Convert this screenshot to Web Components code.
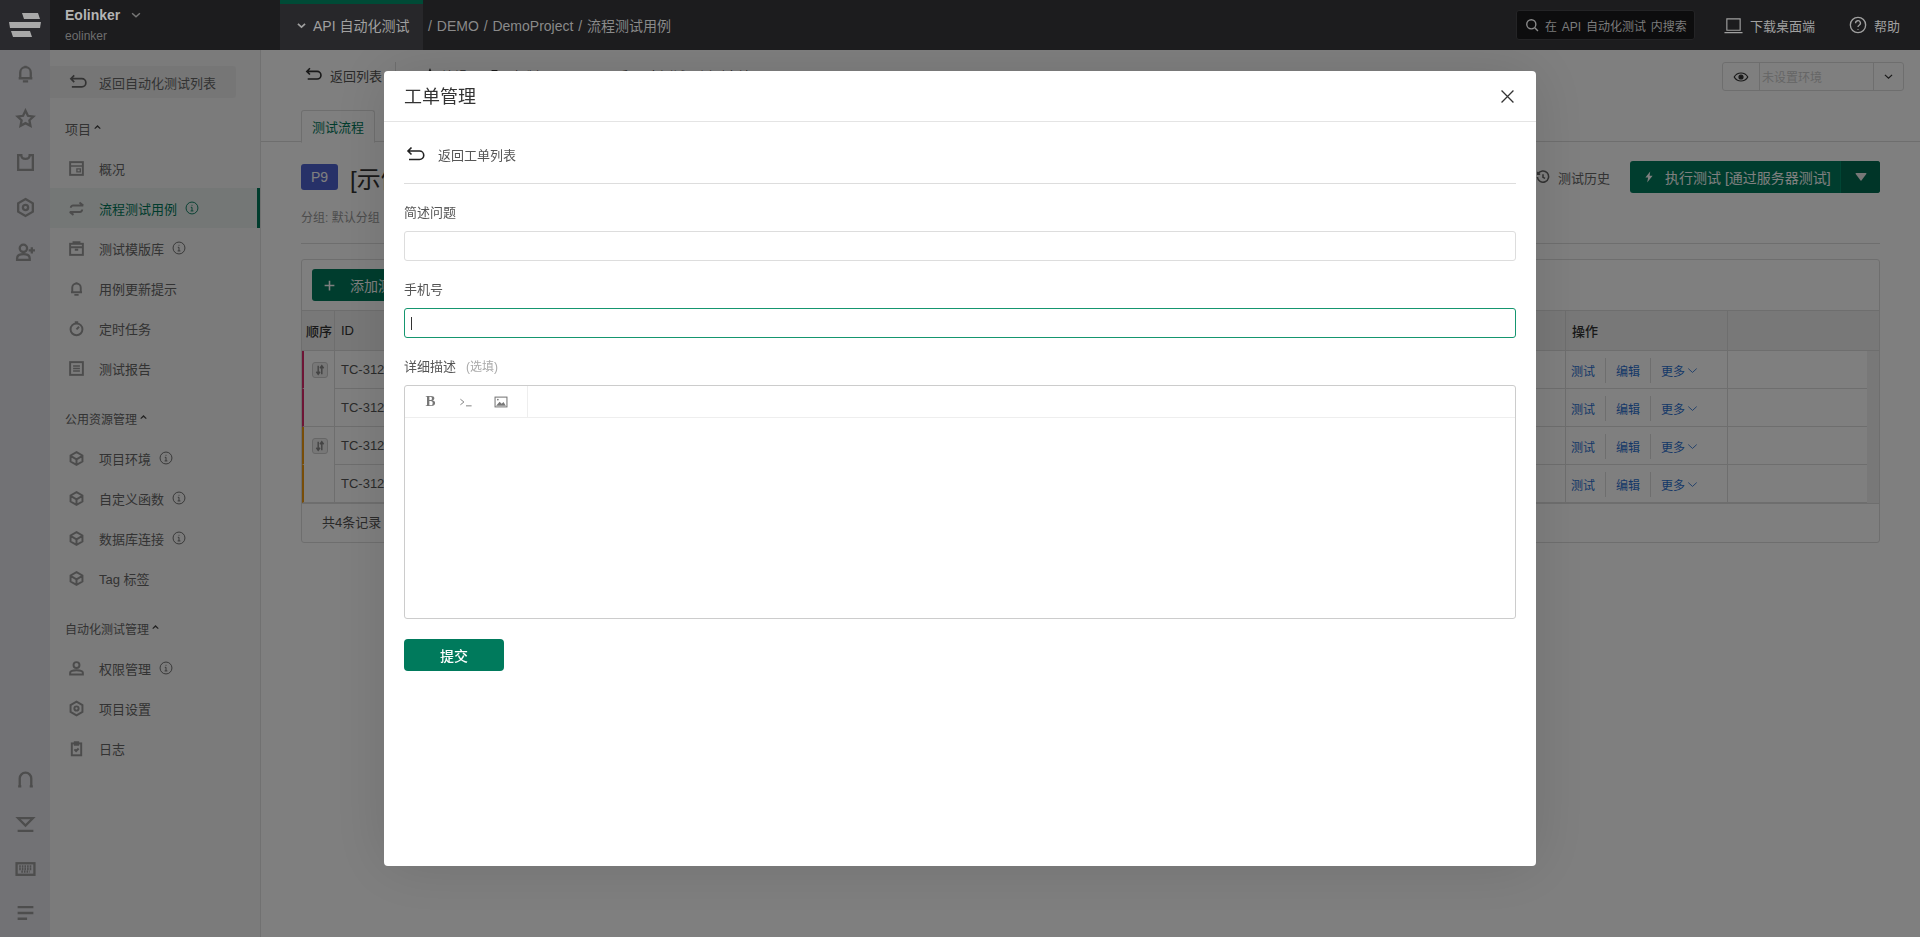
<!DOCTYPE html>
<html lang="zh">
<head>
<meta charset="utf-8">
<title>工单管理</title>
<style>
  html, body { margin: 0; height: 100%; overflow: hidden; }
  body { font: 13px "Liberation Sans", "Noto Sans CJK SC", sans-serif; color: #333; background: #fff; }
</style>
</head>
<body>
<eo-app>
  <eo-topbar slot="top"></eo-topbar>
  <eo-rail slot="rail"></eo-rail>
  <eo-sidebar slot="side">
    <nav-section label="项目">
      <nav-item icon="overview">概况</nav-item>
      <nav-item icon="exchange" info active>流程测试用例</nav-item>
      <nav-item icon="window" info>测试模版库</nav-item>
      <nav-item icon="bell">用例更新提示</nav-item>
      <nav-item icon="stopwatch">定时任务</nav-item>
      <nav-item icon="report">测试报告</nav-item>
    </nav-section>
    <nav-section label="公用资源管理" small>
      <nav-item icon="cube" info>项目环境</nav-item>
      <nav-item icon="cube" info>自定义函数</nav-item>
      <nav-item icon="cube" info>数据库连接</nav-item>
      <nav-item icon="cube">Tag 标签</nav-item>
    </nav-section>
    <nav-section label="自动化测试管理" small>
      <nav-item icon="person" info>权限管理</nav-item>
      <nav-item icon="gear">项目设置</nav-item>
      <nav-item icon="clipboard">日志</nav-item>
    </nav-section>
  </eo-sidebar>
  <eo-main slot="main"></eo-main>
</eo-app>

<ticket-modal heading="工单管理">
  <form-field label="简述问题"><text-box></text-box></form-field>
  <form-field label="手机号"><text-box focused></text-box></form-field>
  <form-field label="详细描述" hint="(选填)"><rich-editor></rich-editor></form-field>
</ticket-modal>

<script>
// all icons share one 20x20 box
const ICONS = {
  bell: '<path d="M5 14.5V9a5 5 0 0 1 10 0v5.500M3.500 14.500h13M7.500 17.500h5M10 2.500V4"/>',
  star: '<path d="M10 2.500l2.300 4.900 5.200.7-3.800 3.600 1 5.300L10 14.400 5.300 17l1-5.300L2.500 8.100l5.200-.7z"/>',
  shirt: '<path d="M6 3H3v14h14V3h-3c0 2-1.500 3.500-4 3.500S6 5 6 3z"/>',
  gear: '<path d="M10 2l7 4v8l-7 4-7-4V6z"/><circle cx="10" cy="10" r="2.500"/>',
  userplus: '<circle cx="8" cy="6" r="3.500"/><path d="M2 17v-1.500c0-2.500 2.500-4 6-4s6 1.500 6 4V17zM16 5v6M13 8h6"/>',
  headset: '<path d="M4.500 16V9a5.500 5.500 0 0 1 11 0v7M3 16.500h3M14 16.500h3"/>',
  download: '<path d="M3 4h14l-7 7zM2.500 16h15"/>',
  keyboard: '<rect x="1.500" y="5" width="17" height="11"/><path d="M4 8h12M4 10.500h12M6 13h8" stroke-dasharray="1.500 1"/>',
  list: '<path d="M2.500 4h15M2.500 9.500h15M2.500 15h9"/>',
  overview: '<rect x="2.500" y="2.500" width="15" height="15"/><path d="M2.500 7h15M10.500 10.500h4V14h-4z" stroke-width="1.600"/>',
  exchange: '<path d="M18 6.500H6a2.700 2.700 0 0 0-2.700 2.700M2 14h12a2.700 2.700 0 0 0 2.700-2.700M13.500 3l4.500 3.500M6.500 17.500L2 14"/>',
  window: '<rect x="2.500" y="4.500" width="15" height="13"/><path d="M2.500 8.500h15M8 11.500h4M6.500 4.500V2.500h7v2"/>',
  stopwatch: '<circle cx="10" cy="11" r="7"/><path d="M10 11l3-3M8 2.500h4"/>',
  report: '<rect x="2.500" y="2.500" width="15" height="15"/><path d="M6 7h8M6 10h8M6 13h8" stroke-width="1.600"/>',
  cube: '<path d="M10 2.500l7 4v7l-7 4-7-4v-7zM3 7l7 4 7-4M10 11v6.500"/>',
  person: '<circle cx="10" cy="6" r="3.500"/><path d="M2.500 17v-2c0-1.800 3-3 7.500-3s7.500 1.200 7.500 3v2z"/>',
  clipboard: '<rect x="4.500" y="4" width="11" height="14"/><path d="M8 2.500h4v3H8zM7.500 11l2 2 3-3"/>',
  back: '<path d="M5.500 2.500L2 6l3.500 3.500M2 6h11.500a4.200 4.200 0 0 1 0 8.500H3"/>',
  info: '<circle cx="10" cy="10" r="8.500"/><path d="M10 5.500v1.200M8.300 9H10v5.200M8 14.200h4"/>',
  search: '<circle cx="9" cy="9" r="6.500"/><path d="M14 14l4.500 4.500"/>',
  monitor: '<path d="M3 3h14v12H3zM.5 17.500h19"/>',
  help: '<circle cx="10" cy="10" r="8.500"/><path d="M7.300 8a2.700 2.700 0 1 1 4 2.300c-.9.5-1.300 1-1.300 2M10 14.500v.8"/>',
  chevron: '<path d="M3.500 7l6.500 6 6.500-6"/>',
  eye: '<path d="M1.500 10c2-3.500 5-5 8.500-5s6.500 1.500 8.500 5c-2 3.500-5 5-8.500 5s-6.500-1.500-8.500-5z"/><circle cx="10" cy="10" r="2.500" fill="currentColor"/>',
  clock: '<path d="M3 5.500A8 8 0 1 1 2 10M2.500 2.500v3.500H6M10 6v4.500l3 1.500"/>',
  bolt: '<path d="M12 1L4 11h4.500L7 19l9-11h-5z" fill="currentColor" stroke="none"/>',
  plus: '<path d="M10 2.500v15M2.500 10h15"/>',
  close: '<path d="M3 3l14 14M17 3L3 17"/>',
  picture: '<rect x="1.500" y="3" width="17" height="14"/><path d="M3 15.500l5-6 3 3 2.500-2.500 3.500 5.500z" fill="currentColor" stroke="none"/><circle cx="5.500" cy="6.500" r="1.200" fill="currentColor" stroke="none"/>',
  terminal: '<path d="M2 6l5 4-5 4M10 15.500h8" stroke-width="1.300"/>',
  drag: '<path d="M7 3v13M4 13l3 4 3-4M13 17V4M10 7l3-4 3 4" stroke-width="2.400"/>'
};

// base class, every element puts css() + html() in an open shadow root
class EoElement extends HTMLElement {
  connectedCallback() {
    if (this.shadowRoot) return;
    this.attachShadow({ mode: "open" }).innerHTML = `<style>${this.css()}</style>${this.html()}`;
  }
  css() { return ""; }
  html() { return "<slot></slot>"; }
}

class EoIcon extends EoElement {
  css() {
    const size = this.getAttribute("size") || 20;
    const weight = this.getAttribute("weight") || 2;
    return `
      :host { display: inline-flex; flex: none; width: ${size}px; height: ${size}px; }
      svg { width: 100%; height: 100%; fill: none; stroke: currentColor; stroke-width: ${weight}; display: block; }`;
  }
  html() {
    return `<svg viewBox="0 0 20 20">${ICONS[this.getAttribute("name")] || ""}</svg>`;
  }
}

class EoApp extends EoElement {
  css() {
    return `
      :host { display: grid; height: 100vh; grid-template: 50px 1fr / 50px 211px 1fr; overflow: hidden; }
      ::slotted([slot=top]) { grid-column: 1 / -1; }`;
  }
  html() {
    return `<slot name="top"></slot><slot name="rail"></slot><slot name="side"></slot><slot name="main"></slot>`;
  }
}

class EoTopbar extends EoElement {
  css() {
    return `
      :host { display: flex; align-items: stretch; height: 50px; background: #1c1c1e; color: #9a9a9a; position: relative; z-index: 20; }
      .logo { width: 50px; background: #29292d; display: flex; align-items: center; justify-content: center; }
      .org { width: 215px; padding-left: 15px; display: flex; flex-direction: column; justify-content: center; }
      .org b { font-size: 14px; color: #b4b4b4; line-height: 16px; display: flex; align-items: center; gap: 10px; margin-top: -1px; }
      .org b eo-icon { color: #777; }
      .org span { font-size: 12px; color: #6e6e6e; line-height: 14px; margin-top: 6px; }
      .module { width: 127px; padding-left: 16px; background: #27272a; border-top: 4px solid #004a36; display: flex; align-items: center; gap: 6px; font-size: 14px; white-space: nowrap; color: #a0a0a0; padding-bottom: 4px; }
      .crumb { margin-left: 5px; display: flex; align-items: center; font-size: 14px; word-spacing: 1px; color: #8a8a8a; white-space: pre; }
      .grow { flex: 1; }
      .search { align-self: center; width: 177px; height: 28px; border: 1px solid #242426; border-radius: 3px; background: #0d0d0e; display: flex; align-items: center; font-size: 12px; word-spacing: 1.500px; color: #7c7c7c; white-space: pre; }
      .search eo-icon { margin: 0 6px 0 8px; color: #8a8a8a; }
      .link { display: flex; align-items: center; gap: 7px; font-size: 13px; color: #a0a0a0; }
      .down { margin-left: 29px; }
      .help { margin-left: 34px; margin-right: 20px; }`;
  }
  html() {
    return `
      <div class="logo">
        <svg width="34" height="26" viewBox="0 0 34 26" fill="#a8a8a8">
          <polygon points="14,1 30,1 32,7 16,7"/>
          <polygon points="1,10 33,10 32,16 2,16"/>
          <polygon points="3,19 22,19 24,25 5,25"/>
        </svg>
      </div>
      <div class="org">
        <b>Eolinker <eo-icon name="chevron" size="12" weight="2.400"></eo-icon></b>
        <span>eolinker</span>
      </div>
      <div class="module"><eo-icon name="chevron" size="11" weight="3"></eo-icon>API 自动化测试</div>
      <div class="crumb">/ DEMO / DemoProject / 流程测试用例</div>
      <div class="grow"></div>
      <div class="search"><eo-icon name="search" size="14" weight="2"></eo-icon>在 API 自动化测试 内搜索</div>
      <div class="link down"><eo-icon name="monitor" size="19" weight="1.200"></eo-icon>下载桌面端</div>
      <div class="link help"><eo-icon name="help" size="18" weight="1.500"></eo-icon>帮助</div>`;
  }
}

class EoRail extends EoElement {
  css() {
    return `
      :host { display: flex; flex-direction: column; justify-content: space-between; background: #e4e4ea; color: #9a9a9a; padding: 1px 0; }
      div div { height: 44.700px; display: flex; align-items: center; justify-content: center; }`;
  }
  html() {
    const cell = n => `<div><eo-icon name="${n}" size="21" weight="2.200"></eo-icon></div>`;
    return `<div>${["bell", "star", "shirt", "gear", "userplus"].map(cell).join("")}</div>
      <div>${["headset", "download", "keyboard", "list"].map(cell).join("")}</div>`;
  }
}

class EoSidebar extends EoElement {
  css() {
    return `
      :host { display: block; background: #f6f6f6; border-right: 1px solid #e2e2e2; padding-top: 16px; }
      .back { width: 186px; height: 32px; display: flex; align-items: center; background: #ededed; border-radius: 0 3px 3px 0; color: #666; }
      .back eo-icon { margin: 0 11px 0 19px; color: #666; }`;
  }
  html() {
    return `<div class="back"><eo-icon name="back" size="19" weight="1.800"></eo-icon>返回自动化测试列表</div><slot></slot>`;
  }
}

class NavSection extends EoElement {
  css() {
    const size = this.hasAttribute("small") ? 12 : 13;
    return `
      :host { display: block; margin-top: 20px; }
      .head { height: 20px; margin-bottom: 10px; padding-left: 15px; display: flex; align-items: center; gap: 3px; font-size: ${size}px; color: #666; }
      svg { width: 7px; height: 4px; fill: #444; margin-top: -2px; }`;
  }
  html() {
    return `<div class="head">${this.getAttribute("label")}<svg viewBox="0 0 8 5"><path d="M4 0l4 4-1 1-3-2.500L1 5 0 4z"/></svg></div><slot></slot>`;
  }
}

class NavItem extends EoElement {
  css() {
    return `
      :host { display: flex; align-items: center; height: 40px; padding-left: 18px; color: #666; box-sizing: border-box; }
      :host([active]) { background: #e9efed; color: #00785a; border-right: 3px solid #00785a; }
      .icon { margin-right: 14px; color: #999; }
      .info { margin-left: 8px; }`;
  }
  html() {
    const info = this.hasAttribute("info") ? `<eo-icon class="info" name="info" size="14" weight="1.300"></eo-icon>` : "";
    return `<eo-icon class="icon" name="${this.getAttribute("icon")}" size="17" weight="2.300"></eo-icon><slot></slot>${info}`;
  }
}

class EoMain extends EoElement {
  css() {
    return `
      :host { display: block; background: #fff; min-width: 0; overflow: hidden; }
      .tools { height: 48px; padding: 12px 16px 0 44px; display: flex; align-items: flex-start; color: #555; }
      .tools > div { height: 26px; display: flex; align-items: center; white-space: nowrap; }
      .tools eo-icon { color: #333; }
      .sep { width: 1px; background: #ddd; height: 20px !important; margin: 0 27px 0 13px; }
      .grow { flex: 1; }
      .tools > .env { width: 180px; height: 27px; border: 1px solid #ddd; border-radius: 3px; color: #ccc; font-size: 12px; }
      .env .eye { width: 36px; height: 100%; border-right: 1px solid #ddd; display: flex; align-items: center; justify-content: center; }
      .env .name { flex: 1; padding-left: 2px; }
      .env .arrow { width: 29px; height: 100%; border-left: 1px solid #ddd; display: flex; align-items: center; justify-content: center; }
      .tabs { height: 31px; padding-left: 40px; border-bottom: 1px solid #ddd; display: flex; }
      .tab { width: 72px; height: 31px; border: 1px solid #ddd; border-bottom: 1px solid #fff; border-radius: 3px 3px 0 0; background: #fff; color: #00785a; display: flex; align-items: center; justify-content: center; }
      .body { padding: 0 40px 0; }
      .head { margin-top: 19px; height: 32px; display: flex; align-items: center; }
      .badge { width: 37px; height: 26px; background: #4f63d0; color: #fff; border-radius: 3px; display: flex; align-items: center; justify-content: center; font-size: 14px; margin-right: 12px; }
      .title { flex: 1; font-size: 24px; color: #333; white-space: nowrap; overflow: hidden; }
      .hist { display: flex; align-items: center; gap: 8px; margin-right: 20px; color: #666; }
      .run { width: 250px; height: 32px; background: #007a5c; border-radius: 3px; color: #fff; display: flex; align-items: center; font-size: 14px; white-space: nowrap; }
      .run .main { flex: 1; display: flex; align-items: center; padding-left: 13px; gap: 10px; }
      .run .more { width: 39px; height: 100%; background: #006a50; border-left: 1px solid #008a68; border-radius: 0 3px 3px 0; display: flex; align-items: center; justify-content: center; }
      .meta { margin-top: 16px; line-height: 18px; padding-bottom: 16px; border-bottom: 1px solid #ddd; font-size: 12px; color: #999; }`;
  }
  html() {
    return `
      <div class="tools">
        <div><eo-icon name="back" size="18" weight="1.800" style="margin-right:7px"></eo-icon>返回列表</div>
        <div class="sep"></div>
        <div><eo-icon name="star" size="14" style="margin-right:4px"></eo-icon>编辑项</div>
        <div style="margin-left:8px"><eo-icon name="window" size="13" style="margin-right:12px"></eo-icon>复制项</div>
        <div style="margin-left:22px"><eo-icon name="report" size="7" style="margin-right:14px"></eo-icon>导入和导出测试用例到本地</div>
        <div class="grow"></div>
        <div class="env">
          <div class="eye"><eo-icon name="eye" size="16" weight="1.500"></eo-icon></div>
          <div class="name">未设置环境</div>
          <div class="arrow"><eo-icon name="chevron" size="11" weight="2.200"></eo-icon></div>
        </div>
      </div>
      <div class="tabs"><div class="tab">测试流程</div></div>
      <div class="body">
        <div class="head">
          <div class="badge">P9</div>
          <div class="title">[示例] 用户登录流程测试</div>
          <div class="hist"><eo-icon name="clock" size="14" weight="2.200"></eo-icon>测试历史</div>
          <div class="run">
            <div class="main"><eo-icon name="bolt" size="12"></eo-icon>执行测试 [通过服务器测试]</div>
            <div class="more"><svg width="12" height="8" viewBox="0 0 13 9" fill="#eee"><path d="M1 0h11q1 0 .5 1L7 8.500q-.5.5-1 0L.5 1Q0 0 1 0z"/></svg></div>
          </div>
        </div>
        <div class="meta">分组: 默认分组</div>
        <case-table></case-table>
      </div>`;
  }
}

class CaseTable extends EoElement {
  css() {
    return `
      :host { display: block; margin-top: 15px; border: 1px solid #ddd; border-radius: 3px; background: #fff; }
      .bar { height: 50px; box-sizing: border-box; padding: 9px 10px; }
      .add { width: 170px; height: 32px; background: #007a5c; border-radius: 3px; color: #fff; display: flex; align-items: center; padding-left: 11px; gap: 14px; font-size: 14px; box-sizing: border-box; }
      .thead { display: grid; grid-template-columns: 32px 1fr 162px 152px; height: 39px; background: #f0f0f0; border-top: 1px solid #ddd; border-bottom: 1px solid #ddd; color: #333; }
      .thead div { display: flex; align-items: center; border-left: 1px solid #ddd; padding-left: 6px; font-weight: 500; }
      .thead div:first-child { border-left: 0; padding-left: 4px; white-space: nowrap; }
      .thead .id { font-weight: normal; }
      .wrap { display: flex; }
      .rows { flex: 1; }
      .track { width: 12px; background: #f0f0f0; }
      .foot { height: 39px; box-sizing: border-box; border-top: 1px solid #ddd; padding: 0 0 3px 20px; display: flex; align-items: center; color: #555; }`;
  }
  html() {
    return `
      <div class="bar"><div class="add"><eo-icon name="plus" size="13" weight="2.400"></eo-icon>添加测试用例</div></div>
      <div class="thead"><div>顺序</div><div class="id">ID</div><div>操作</div><div></div></div>
      <div class="wrap">
        <div class="rows">
          <case-row color="#dc2a6c" drag code="TC-3121"></case-row>
          <case-row color="#dc2a6c" last code="TC-3122"></case-row>
          <case-row color="#f09a10" drag code="TC-3123"></case-row>
          <case-row color="#f09a10" last code="TC-3124"></case-row>
        </div>
        <div class="track"></div>
      </div>
      <div class="foot">共4条记录</div>`;
  }
}

class CaseRow extends EoElement {
  css() {
    const last = this.hasAttribute("last");
    return `
      :host { display: grid; grid-template-columns: 32px 1fr 162px 140px; height: 38px; box-sizing: border-box; color: #555; }
      .num { border-left: 2px solid ${this.getAttribute("color")}; border-bottom: 1px solid ${last ? "#ddd" : "transparent"}; padding: 11px 0 0 8px; box-sizing: border-box; }
      .drag { width: 16px; height: 16px; box-sizing: border-box; border: 1px solid #ccc; border-radius: 3px; background: #eee; color: #888; display: flex; align-items: center; justify-content: center; }
      .cell { border-left: 1px solid #ddd; border-bottom: 1px solid #ddd; display: flex; align-items: center; padding-left: 6px; }
      .ops { padding: 2px 0 0 5px; font-size: 12px; color: #2a6fd0; }
      .ops i { width: 1px; height: 25px; background: #ddd; margin: 0 10px; }
      .ops eo-icon { margin-left: 1px; }`;
  }
  html() {
    const drag = this.hasAttribute("drag") ? `<div class="drag"><eo-icon name="drag" size="12"></eo-icon></div>` : "";
    return `
      <div class="num">${drag}</div>
      <div class="cell code">${this.getAttribute("code")}</div>
      <div class="cell ops">测试<i></i>编辑<i></i>更多<eo-icon name="chevron" size="13" weight="1.300"></eo-icon></div>
      <div class="cell"></div>`;
  }
}

class TicketModal extends EoElement {
  css() {
    return `
      :host { position: fixed; inset: 50px 0 0 0; z-index: 10; background: rgba(0, 0, 0, .5); display: flex; justify-content: center; align-items: flex-start; padding-top: 21px; }
      .box { width: 1152px; height: 795px; background: #fff; border-radius: 4px; box-shadow: 0 0 60px rgba(0, 0, 0, .12); color: #555; }
      .head { height: 50px; border-bottom: 1px solid #e4e4e4; padding: 0 20px; display: flex; align-items: center; justify-content: space-between; font-size: 18px; color: #333; }
      .head span { margin-bottom: 2px; }
      .close { color: #333; }
      .content { padding: 20px 20px 0; }
      .back { height: 26px; padding-bottom: 15px; border-bottom: 1px solid #ddd; display: flex; align-items: center; }
      .back span { margin-bottom: 2px; }
      .back eo-icon { margin: 0 12px 0 2px; color: #222; }
      .submit { margin-top: 20px; width: 100px; height: 32px; background: #007a5c; border-radius: 4px; color: #fff; font-size: 14px; font-weight: 500; display: flex; align-items: center; justify-content: center; }`;
  }
  html() {
    return `
      <div class="box">
        <div class="head"><span>${this.getAttribute("heading")}</span><eo-icon class="close" name="close" size="17" weight="1.500"></eo-icon></div>
        <div class="content">
          <div class="back"><eo-icon name="back" size="20" weight="1.600"></eo-icon><span>返回工单列表</span></div>
          <slot></slot>
          <div class="submit">提交</div>
        </div>
      </div>`;
  }
}

class FormField extends EoElement {
  css() {
    return `
      :host { display: block; margin-top: 20px; }
      label { display: block; line-height: 18px; margin-bottom: 9px; color: #555; }
      span { margin-left: 10px; font-size: 12px; color: #aaa; }`;
  }
  html() {
    const hint = this.getAttribute("hint");
    return `<label>${this.getAttribute("label")}${hint ? `<span>${hint}</span>` : ""}</label><slot></slot>`;
  }
}

class TextBox extends EoElement {
  css() {
    return `
      :host { display: flex; align-items: center; height: 30px; box-sizing: border-box; border: 1px solid #ddd; border-radius: 3px; padding-left: 6px; }
      :host([focused]) { border-color: #15966f; }
      i { width: 1px; height: 13px; background: #333; display: none; }
      :host([focused]) i { display: block; }`;
  }
  html() { return "<i></i>"; }
}

class RichEditor extends EoElement {
  css() {
    return `
      :host { display: block; height: 234px; box-sizing: border-box; border: 1px solid #ccc; border-radius: 3px; }
      .bar { height: 31px; border-bottom: 1px solid #eee; display: flex; }
      .group { display: flex; padding: 0 9px 0 8px; border-right: 1px solid #eee; color: #777; }
      .group div { width: 35px; display: flex; align-items: center; justify-content: center; }
      b { font: bold 15px "Liberation Serif", serif; color: #777; }`;
  }
  html() {
    return `
      <div class="bar"><div class="group">
        <div><b>B</b></div>
        <div><eo-icon name="terminal" size="14"></eo-icon></div>
        <div><eo-icon name="picture" size="14" weight="1.500"></eo-icon></div>
      </div></div>`;
  }
}

customElements.define("eo-icon", EoIcon);
customElements.define("eo-app", EoApp);
customElements.define("eo-topbar", EoTopbar);
customElements.define("eo-rail", EoRail);
customElements.define("eo-sidebar", EoSidebar);
customElements.define("nav-section", NavSection);
customElements.define("nav-item", NavItem);
customElements.define("eo-main", EoMain);
customElements.define("case-table", CaseTable);
customElements.define("case-row", CaseRow);
customElements.define("ticket-modal", TicketModal);
customElements.define("form-field", FormField);
customElements.define("text-box", TextBox);
customElements.define("rich-editor", RichEditor);
</script>
</body>
</html>
